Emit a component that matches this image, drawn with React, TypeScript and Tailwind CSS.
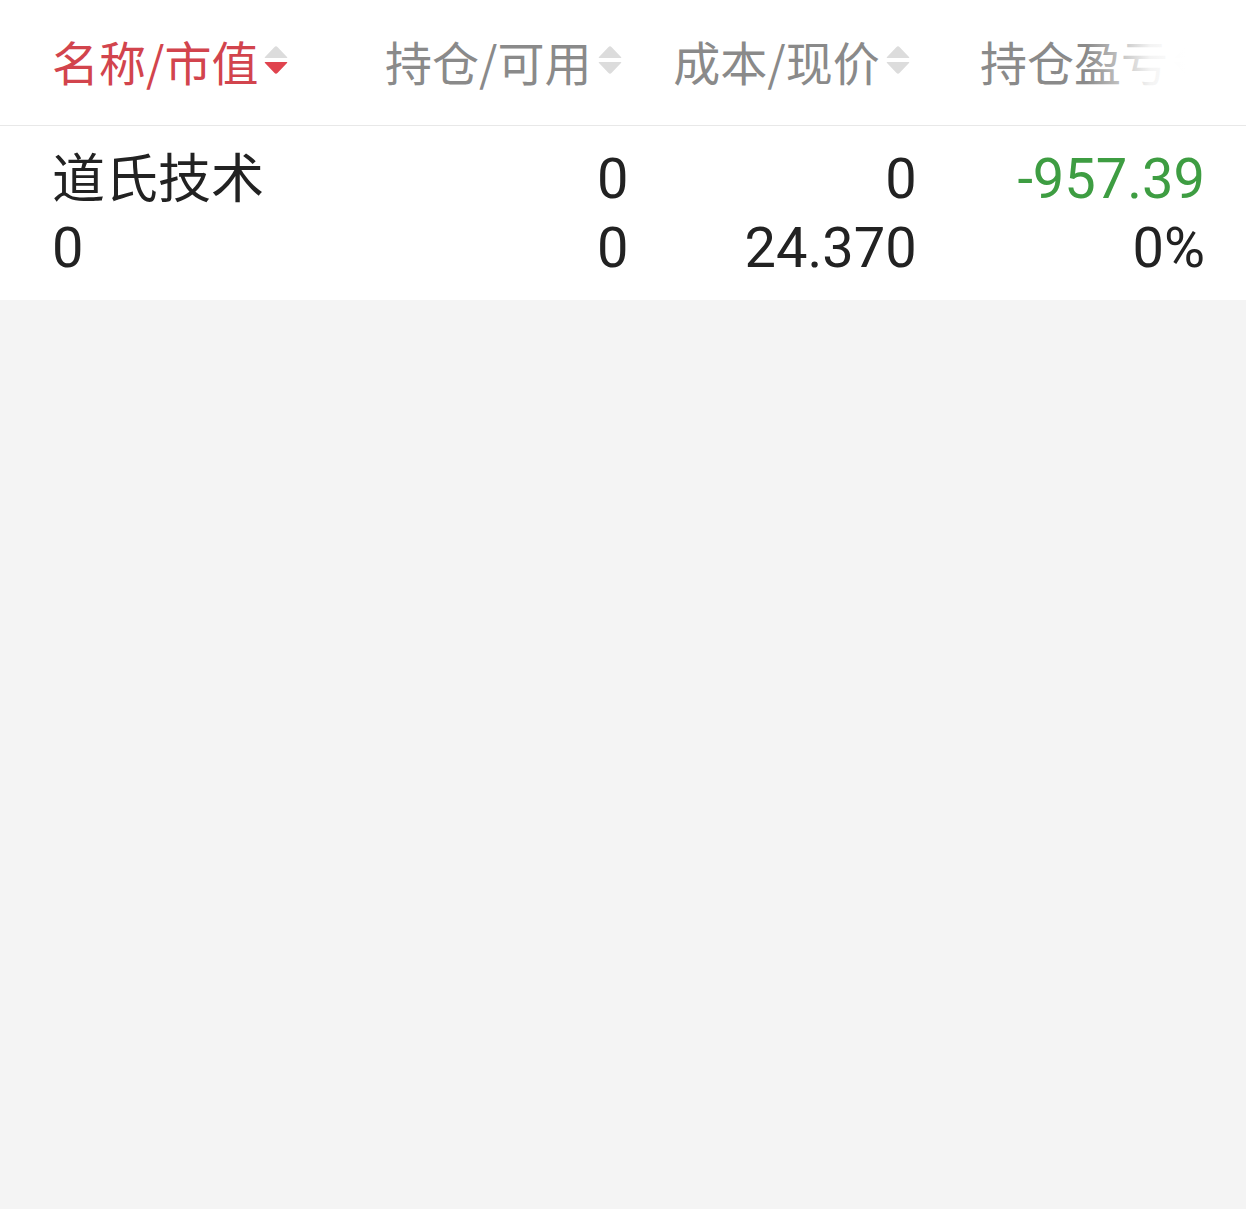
import React from 'react';

type SortState = 'none' | 'desc' | 'asc';

const SortIcon: React.FC<{ state: SortState }> = ({ state }) => {
  const up = state === 'asc' ? '#e0434e' : '#dcdcdc';
  const down = state === 'desc' ? '#e0434e' : '#dcdcdc';
  return (
    <svg width="24" height="30" viewBox="0 0 24 30" className="shrink-0">
      <path d="M10.3 2.2 Q12 0.4 13.7 2.2 L23 12 Q24 13 22.6 13 L1.4 13 Q0 13 1 12 Z" fill={up} />
      <path d="M1.4 17 L22.6 17 Q24 17 23 18 L13.7 27.8 Q12 29.6 10.3 27.8 L1 18 Q0 17 1.4 17 Z" fill={down} />
    </svg>
  );
};

const headers: { label: string; sort: SortState; active?: boolean }[] = [
  { label: '名称/市值', sort: 'desc', active: true },
  { label: '持仓/可用', sort: 'none' },
  { label: '成本/现价', sort: 'none' },
  { label: '持仓盈亏', sort: 'none' },
];

const cjk = { fontFamily: '"Noto Sans CJK SC", "Noto Sans", sans-serif' };
const num = { fontFamily: 'Roboto, "Noto Sans CJK SC", sans-serif' };

export default function App() {
  return (
    <div className="min-h-[1209px] w-full bg-[#f4f4f4]" style={cjk}>
      {/* column header */}
      <div className="relative bg-white border-b border-[#e8e8e8]">
        <div className="grid grid-cols-4 h-[125px] pl-[52px] pr-[41px] items-center">
          {headers.map((h, i) => (
            <div
              key={h.label}
              className={`flex items-center gap-[6px] pb-[5px] ${i === 0 ? 'justify-start' : 'justify-end pr-[7px]'}`}
            >
              <span
                className={`text-[47px] leading-none whitespace-nowrap ${h.active ? 'text-[#d2444d]' : 'text-[#8a8a8a]'}`}
              >
                {h.label}
              </span>
              <SortIcon state={h.sort} />
            </div>
          ))}
        </div>
        <div className="pointer-events-none absolute right-0 top-0 h-full w-[160px] bg-[linear-gradient(to_right,rgba(255,255,255,0)_0%,rgba(255,255,255,0.9)_40%,#ffffff_62%)]" />
      </div>

      {/* position row */}
      <div className="bg-white grid grid-cols-4 pl-[52px] pr-[41px] pt-[19px] pb-[17px] text-[#222222]">
        <div className="flex flex-col">
          <span className="text-[53px] leading-[61px] mb-[8px]">道氏技术</span>
          <span className="text-[56px] leading-[69px]" style={num}>0</span>
        </div>
        <div className="flex flex-col items-end text-[56px] leading-[69px]" style={num}>
          <span>0</span>
          <span>0</span>
        </div>
        <div className="flex flex-col items-end text-[56px] leading-[69px]" style={num}>
          <span>0</span>
          <span>24.370</span>
        </div>
        <div className="flex flex-col items-end text-[56px] leading-[69px]" style={num}>
          <span className="text-[#3e9d42]">-957.39</span>
          <span>0%</span>
        </div>
      </div>
    </div>
  );
}
